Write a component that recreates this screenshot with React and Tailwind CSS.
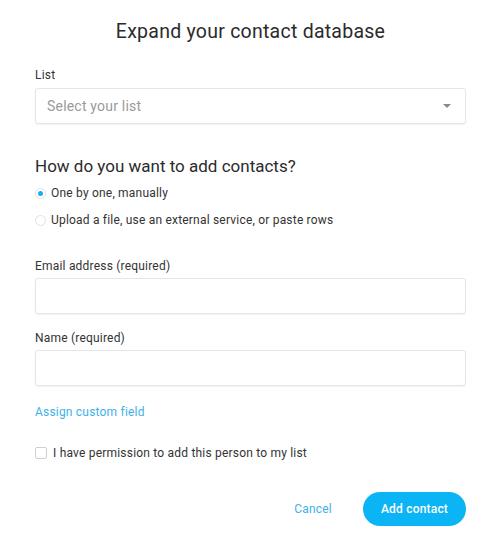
import { useState } from "react"

function Field({ label, className = "" }) {
  return (
    <div className={className}>
      <label className="block text-[12px] leading-4 tracking-[0.2px] text-[#333]">{label}</label>
      <input
        type="text"
        className="mt-[4px] block h-[36px] w-full rounded-[3px] border border-[#e6e6e6] bg-white px-3 text-[14px] shadow-[0_1px_2px_rgba(0,0,0,0.06)] outline-none"
      />
    </div>
  )
}

export default function App() {
  const [mode, setMode] = useState("manual")
  const [allowed, setAllowed] = useState(false)

  return (
    <div className="min-h-[550px] w-[500px] bg-white pl-[35px] pr-[34px] pt-[20px] font-['Roboto',sans-serif] text-[#2b2b2b]">
      <h1 className="text-center text-[19.5px] leading-6 tracking-[0.25px]">Expand your contact database</h1>

      {/* List select */}
      <div className="mt-[23px]">
        <label className="block text-[12px] leading-4 tracking-[0.2px] text-[#333]">List</label>
        <button
          type="button"
          className="mt-[5px] flex h-[36px] w-full items-center justify-between rounded-[3px] border border-[#e6e6e6] bg-white pl-[11px] pr-[14px] shadow-[0_1px_2px_rgba(0,0,0,0.06)]"
        >
          <span className="text-[14px] tracking-[0.2px] text-[#9a9a9a]">Select your list</span>
          <span className="h-0 w-0 border-x-[4px] border-t-[4px] border-x-transparent border-t-[#8a8a8a]" />
        </button>
      </div>

      {/* Method */}
      <h2 className="mt-[31px] text-[17px] leading-[22px]">How do you want to add contacts?</h2>
      <div className="mt-[8px] space-y-[11px]">
        {[
          ["manual", "One by one, manually"],
          ["upload", "Upload a file, use an external service, or paste rows"],
        ].map(([key, text]) => (
          <label
            key={key}
            className="flex cursor-pointer items-center text-[12px] leading-4 tracking-[0.2px] text-[#333]"
            onClick={() => setMode(key)}
          >
            <span className="mr-[5px] flex h-[11px] w-[11px] items-center justify-center rounded-full border border-[#e2e2e2] bg-white">
              {mode === key && <span className="h-[5px] w-[5px] rounded-full bg-[#1aaef0]" />}
            </span>
            {text}
          </label>
        ))}
      </div>

      <Field label="Email address (required)" className="mt-[30px]" />
      <Field label="Name (required)" className="mt-[16px]" />

      <a href="#" className="mt-[18px] block text-[12px] leading-4 tracking-[0.2px] text-[#3eb1e8]">
        Assign custom field
      </a>

      <label className="mt-[25px] flex cursor-pointer items-center text-[12px] leading-4 tracking-[0.2px] text-[#333]">
        <input
          type="checkbox"
          checked={allowed}
          onChange={(e) => setAllowed(e.target.checked)}
          className="mr-[6px] h-[12px] w-[12px] appearance-none rounded-[2px] border border-[#cfcfcf] bg-white"
        />
        I have permission to add this person to my list
      </label>

      <div className="mt-[31px] flex items-center justify-end">
        <button type="button" className="mr-[31px] text-[12px] tracking-[0.2px] text-[#3eb1e8]">
          Cancel
        </button>
        <button type="button" className="h-[34px] w-[103px] rounded-full bg-[#0ab4f5] text-[12px] font-medium tracking-[0.2px] text-white">
          Add contact
        </button>
      </div>
    </div>
  )
}
